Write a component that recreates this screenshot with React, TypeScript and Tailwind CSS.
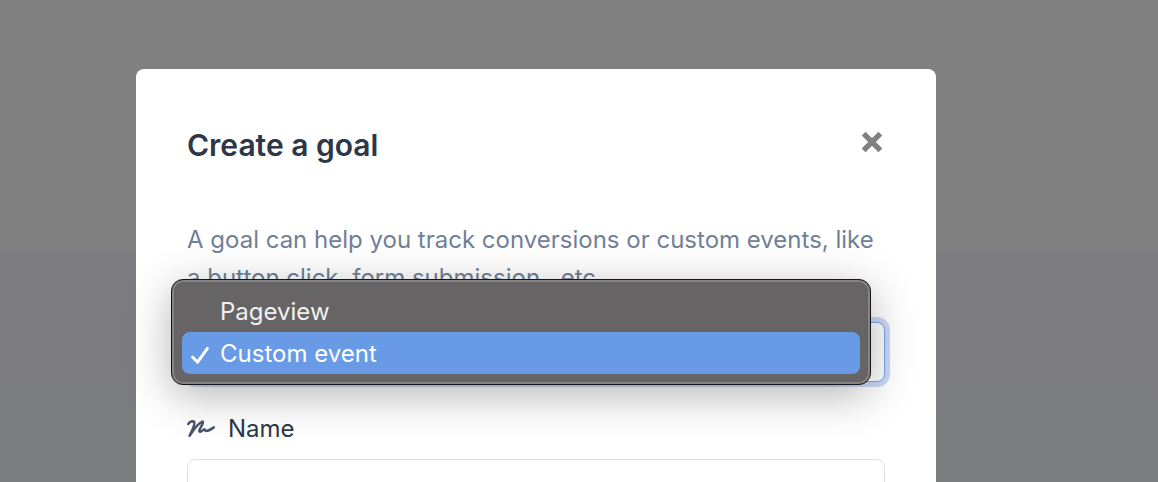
import { useState } from "react";

const goalTypes = ["Pageview", "Custom event"];

function CloseIcon() {
  return (
    <svg viewBox="0 0 22 22" className="size-[22px]" aria-hidden="true">
      <path d="M2.6 2.6 L19.4 19.4 M19.4 2.6 L2.6 19.4" fill="none" stroke="#808080" strokeWidth="5.4" />
    </svg>
  );
}

function CheckIcon() {
  return (
    <svg viewBox="0 0 20 20" className="size-5" aria-hidden="true">
      <path
        d="M2.5 12 L7.6 17.2 L17.4 3.4"
        fill="none"
        stroke="currentColor"
        strokeWidth="3"
        strokeLinecap="round"
        strokeLinejoin="round"
      />
    </svg>
  );
}

function SignatureIcon() {
  return (
    <svg viewBox="0 0 28 20" className="h-5 w-7" aria-hidden="true">
      <path
        d="M1.3 5 C2.6 2.4 6 1.8 7.2 3 C8.4 5 5 11.6 2.6 16.8 C6.4 11 11.4 3.8 15.4 2.6 C17.4 2.8 13.2 8.6 12.4 11.2 C12 13.6 14 13 17 10.4 C18.4 9.8 17.4 12 19.2 12 C22 11.8 24.4 10 26.8 8.4"
        fill="none"
        stroke="#4a5568"
        strokeWidth="2.5"
        strokeLinecap="round"
        strokeLinejoin="round"
      />
    </svg>
  );
}

function GoalTypeField() {
  const [selected, setSelected] = useState("Custom event");

  return (
    <div className="relative mt-[25px]">
      <select
        aria-label="Goal type"
        value={selected}
        onChange={(e) => setSelected(e.target.value)}
        className="block h-[60px] w-full appearance-none rounded-lg border border-[#7ca2f0] bg-white px-4 text-2xl text-[#2d3748] ring-[5px] ring-[#cad8f8] outline-none"
      >
        {goalTypes.map((type) => (
          <option key={type}>{type}</option>
        ))}
      </select>
      <div
        role="listbox"
        aria-label="Goal types"
        className="absolute -top-[43px] right-[14px] -left-4 rounded-xl border border-[#161616] bg-[#666465] p-[10px] shadow-[inset_0_0_0_2px_#858384,0_10px_44px_rgba(0,0,0,0.3)]"
      >
        {goalTypes.map((type) => (
          <button
            key={type}
            type="button"
            role="option"
            aria-selected={type === selected}
            onClick={() => setSelected(type)}
            className="flex h-[42px] w-full items-center gap-2 rounded-lg px-2 pt-0.5 text-left text-2xl text-[#f0f0f0] aria-selected:bg-[#689ae6] aria-selected:text-white"
          >
            <span className="flex w-[22px] pt-0.5">{type === selected && <CheckIcon />}</span>
            {type}
          </button>
        ))}
      </div>
    </div>
  );
}

export default function App() {
  return (
    <div className="h-screen overflow-hidden bg-[linear-gradient(#808080_250px,#7c7c80_250px,#7c7c80_380px,#7b7c7e_420px)] pt-[69px] pr-[222px] pl-[136px] font-['Inter','Liberation_Sans',sans-serif]">
      <div role="dialog" aria-labelledby="goal-title" className="rounded-lg bg-white px-[51px] pt-14 pb-14">
        <div className="flex h-10 items-center justify-between">
          <h1 id="goal-title" className="text-[30px] font-semibold text-[#2d3748]">
            Create a goal
          </h1>
          <button type="button" aria-label="Close" className="mb-1.5 p-0.5">
            <CloseIcon />
          </button>
        </div>
        <p className="mt-14 text-2xl leading-[38px] text-[#718096]">
          A goal can help you track conversions or custom events, like a button click, form submission..
          etc.
        </p>
        <GoalTypeField />
        <label htmlFor="goal-name" className="mt-7 flex h-9 items-center gap-[13px] pt-0.5 text-2xl text-[#2d3748]">
          <SignatureIcon />
          Name
        </label>
        <input
          id="goal-name"
          type="text"
          className="mt-[13px] block h-[60px] w-full rounded-lg border border-[#dce1ec] bg-white px-4 text-2xl text-[#2d3748] outline-none"
        />
      </div>
    </div>
  );
}
